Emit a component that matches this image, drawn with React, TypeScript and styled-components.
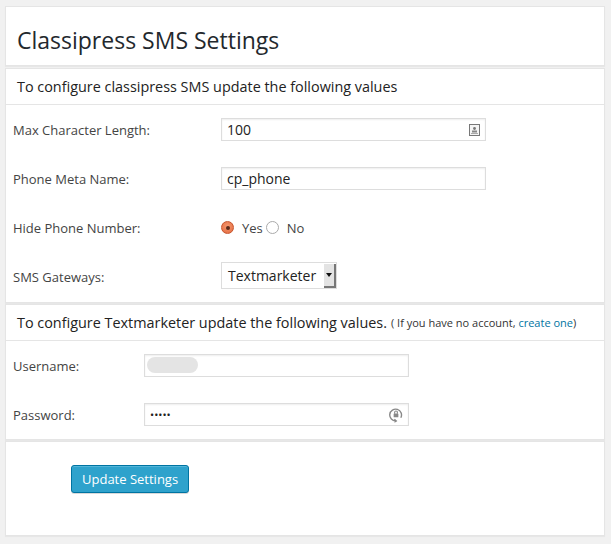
import React from "react";
import styled, { createGlobalStyle } from "styled-components";

const Global = createGlobalStyle`
  html, body { margin: 0; padding: 0; background: #f1f1f1; }
  body { font-family: "Open Sans", "Noto Sans", sans-serif; color: #444; font-size: 13px; }
`;

const Page = styled.div`
  padding: 6px 6px 8px 5px;
  display: flex;
  flex-direction: column;
  gap: 1px;
`;

const Card = styled.section<{ $after?: number }>`
  background: #fff;
  border: 1px solid #e5e5e5;
  box-shadow: 0 1px 1px rgba(0, 0, 0, 0.04);
  margin-bottom: ${(p) => p.$after ?? 0}px;
`;

const Title = styled.h2`
  margin: 0;
  padding: 19px 11px 10px;
  font-size: 23px;
  line-height: 29px;
  font-weight: 400;
  color: #23282d;
`;

const SectionHead = styled.div`
  height: 35px;
  display: flex;
  align-items: center;
  padding: 0 11px;
  font-size: 14.4px;
  color: #222;
  border-bottom: 1px solid #e5e5e5;
`;

const Note = styled.span`
  font-size: 11px;
  margin-left: 4px;
  color: #333;
`;

const Link = styled.a`
  color: #0074a2;
  text-decoration: none;
`;

const Row = styled.div<{ $label: number }>`
  display: grid;
  grid-template-columns: ${(p) => p.$label}px 1fr;
  align-items: center;
  height: 49px;
  padding-left: 7px;
`;

const Label = styled.label`
  font-size: 13px;
  color: #444;
`;

const Field = styled.div`
  position: relative;
  width: 265px;
  height: 23px;
`;

const Input = styled.input<{ $small?: boolean }>`
  box-sizing: border-box;
  width: 100%;
  height: 100%;
  margin: 0;
  border: 1px solid #ddd;
  box-shadow: inset 0 1px 2px rgba(0, 0, 0, 0.07);
  background: #fff;
  padding: 0 5px;
  font-family: "Open Sans", "Noto Sans", sans-serif;
  font-size: ${(p) => (p.$small ? "11px" : "14px")};
  color: #222;
  outline: none;
`;

const Adorn = styled.span`
  position: absolute;
  right: 6px;
  top: 50%;
  transform: translateY(-50%);
  display: flex;
`;

const Redacted = styled.span`
  position: absolute;
  left: 3px;
  top: 3px;
  width: 51px;
  height: 16px;
  border-radius: 8px;
  background: #e4e4e4;
  filter: blur(0.6px);
`;

const Radios = styled.div`
  display: flex;
  align-items: center;
  font-size: 13px;
  color: #444;
`;

const RadioDot = styled.span<{ $on?: boolean }>`
  box-sizing: border-box;
  width: 13px;
  height: 13px;
  border-radius: 50%;
  display: inline-flex;
  align-items: center;
  justify-content: center;
  margin-right: 8px;
  border: 1px solid ${(p) => (p.$on ? "#c7552d" : "#aaa")};
  background: ${(p) =>
    p.$on ? "radial-gradient(circle at 50% 40%, #f5996f, #e2673d)" : "#fff"};
  &::after {
    content: "";
    width: 4px;
    height: 4px;
    border-radius: 50%;
    background: ${(p) => (p.$on ? "#5a2a1a" : "transparent")};
  }
`;

const RadioText = styled.span`
  margin-right: 3px;
`;

const Select = styled.div`
  box-sizing: border-box;
  width: 116px;
  height: 27px;
  border: 1px solid #ddd;
  display: flex;
  align-items: stretch;
  background: #fff;
  margin-top: -2px;
`;

const SelectText = styled.span`
  flex: 1;
  display: flex;
  align-items: center;
  padding-left: 6px;
  font-size: 14px;
  color: #222;
`;

const SelectArrow = styled.span`
  width: 10px;
  margin: 1px 0 0;
  background: #e3e3e3;
  border-right: 2px solid #777;
  border-bottom: 2px solid #777;
  display: flex;
  align-items: center;
  justify-content: center;
  &::after {
    content: "";
    border-left: 3px solid transparent;
    border-right: 3px solid transparent;
    border-top: 4px solid #111;
  }
`;

const SectionBody = styled.div<{ $bottom: number }>`
  padding-bottom: ${(p) => p.$bottom}px;
`;

const Footer = styled.div`
  padding: 23px 0 42px 65px;
`;

const Button = styled.button`
  height: 28px;
  padding: 0 10px;
  font-family: "Open Sans", "Noto Sans", sans-serif;
  font-size: 13px;
  color: #fff;
  background: #2ea2cc;
  border: 1px solid #0074a2;
  border-radius: 3px;
  box-shadow: inset 0 1px 0 rgba(120, 200, 230, 0.5), 0 1px 0 rgba(0, 0, 0, 0.15);
  cursor: pointer;
`;

const CardIcon = () => (
  <svg width="11" height="12" viewBox="0 0 11 12">
    <rect x="0.5" y="0.5" width="10" height="11" fill="#f4f4f4" stroke="#777" />
    <circle cx="5.5" cy="4.5" r="1.4" fill="#777" />
    <rect x="3" y="6.5" width="5" height="2" fill="#888" />
    <rect x="2" y="9" width="7" height="1" fill="#aaa" />
  </svg>
);

const LockIcon = () => (
  <svg width="14" height="15" viewBox="0 0 13 14">
    <path d="M6.5 12.5 A5.5 5.5 0 1 1 11 9.6" fill="none" stroke="#888" strokeWidth="1.3" />
    <path d="M5 11 L6.8 12.6 L5 14" fill="none" stroke="#888" strokeWidth="1.2" />
    <rect x="4.3" y="5.6" width="4.4" height="3.6" rx="0.5" fill="#888" />
    <path d="M5.2 5.8 V4.6 A1.3 1.3 0 0 1 7.8 4.6 V5.8" fill="none" stroke="#888" strokeWidth="1" />
  </svg>
);

export default function App() {
  return (
    <>
      <Global />
      <Page>
        <Card $after={1}>
          <Title>Classipress SMS Settings</Title>
        </Card>
        <Card>
          <SectionHead>To configure classipress SMS update the following values</SectionHead>
          <SectionBody $bottom={1}>
            <Row $label={208}>
              <Label>Max Character Length:</Label>
              <Field>
                <Input defaultValue="100" />
                <Adorn>
                  <CardIcon />
                </Adorn>
              </Field>
            </Row>
            <Row $label={208}>
              <Label>Phone Meta Name:</Label>
              <Field>
                <Input defaultValue="cp_phone" />
              </Field>
            </Row>
            <Row $label={208}>
              <Label>Hide Phone Number:</Label>
              <Radios>
                <RadioDot $on />
                <RadioText>Yes</RadioText>
                <RadioDot />
                <RadioText>No</RadioText>
              </Radios>
            </Row>
            <Row $label={208}>
              <Label>SMS Gateways:</Label>
              <Select>
                <SelectText>Textmarketer</SelectText>
                <SelectArrow />
              </Select>
            </Row>
          </SectionBody>
        </Card>
        <Card>
          <SectionHead>
            To configure Textmarketer update the following values.
            <Note>
              ( If you have no account, <Link href="#">create one</Link>)
            </Note>
          </SectionHead>
          <SectionBody $bottom={0}>
            <Row $label={131}>
              <Label>Username:</Label>
              <Field>
                <Input defaultValue="" />
                <Redacted />
              </Field>
            </Row>
            <Row $label={131}>
              <Label>Password:</Label>
              <Field>
                <Input type="password" defaultValue="abcde" $small />
                <Adorn>
                  <LockIcon />
                </Adorn>
              </Field>
            </Row>
          </SectionBody>
        </Card>
        <Card>
          <Footer>
            <Button>Update Settings</Button>
          </Footer>
        </Card>
      </Page>
    </>
  );
}
